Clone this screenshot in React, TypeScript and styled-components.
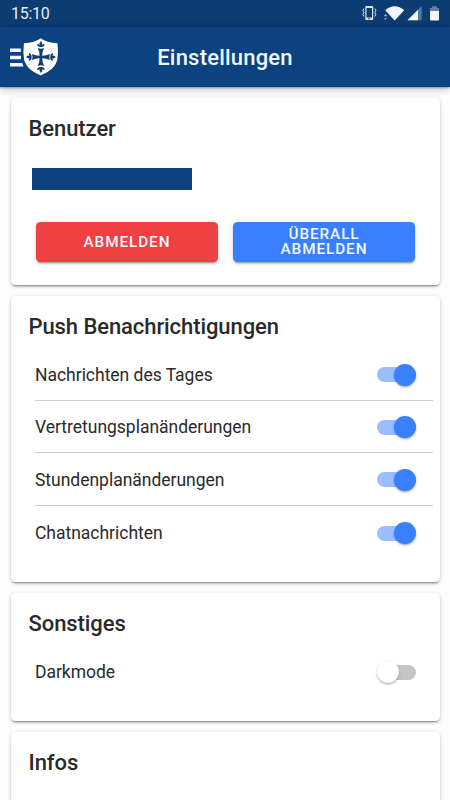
import React, { useState } from "react";
import styled, { createGlobalStyle } from "styled-components";

const GlobalStyle = createGlobalStyle`
  * { box-sizing: border-box; }
  html, body { margin: 0; padding: 0; }
  body {
    font-family: Roboto, sans-serif;
    background: #fdfdfd;
    color: #2a2a2a;
    overflow: hidden;
  }
`;

const Screen = styled.div`
  display: flex;
  flex-direction: column;
  height: 800px;
  overflow: hidden;
`;

const StatusBar = styled.div`
  flex: none;
  display: flex;
  align-items: center;
  justify-content: space-between;
  height: 27px;
  padding: 0 8px 0 11px;
  background: #0c3c72;
  color: #e6eef8;
  font-size: 16px;
  line-height: 26px;
`;

const Clock = styled.span`
  letter-spacing: -0.3px;
`;

const Toolbar = styled.header`
  flex: none;
  display: grid;
  grid-template-columns: 60px 1fr 60px;
  align-items: center;
  height: 60px;
  padding-bottom: 1px;
  background: #0b427f;
  box-shadow: 0 1px 2px rgba(11, 66, 127, 0.45), 0 2px 8px rgba(0, 0, 0, 0.22);
  z-index: 1;
`;

const MenuButton = styled.button`
  display: flex;
  padding: 0 0 0 10px;
  border: 0;
  background: none;
`;

const Title = styled.h1`
  margin: 0;
  padding-top: 3px;
  text-align: center;
  font-size: 22px;
  font-weight: 500;
  letter-spacing: 0.2px;
  line-height: 28px;
  color: #eef8ff;
`;

const Content = styled.main`
  flex: 1;
  display: flex;
  flex-direction: column;
  gap: 11px;
  padding: 11px 10px 0 11px;
`;

const Card = styled.section<{ $height: number }>`
  flex: none;
  height: ${(p) => p.$height}px;
  padding: 17px 7px 0 17.5px;
  border-radius: 4.5px;
  background: #fff;
  box-shadow: 0 3px 1px -2px rgba(0, 0, 0, 0.24), 0 2px 2px 0 rgba(0, 0, 0, 0.16),
    0 1px 5px 0 rgba(0, 0, 0, 0.14);
`;

const CardTitle = styled.h2`
  margin: 0;
  font-size: 22px;
  font-weight: 500;
  letter-spacing: -0.08px;
  line-height: 28px;
`;

const UserName = styled.div`
  width: 160px;
  height: 22px;
  margin: 25px 0 0 3.5px;
  background: #0b427f;
`;

const ButtonRow = styled.div`
  display: grid;
  grid-template-columns: 182px 182px;
  gap: 15px;
  margin: 32px 0 0 7.5px;
`;

const Button = styled.button<{ $color: string }>`
  height: 39.5px;
  padding: 1px 40px 0;
  border: 0;
  border-radius: 4.5px;
  background: ${(p) => p.$color};
  color: #f3f8ff;
  font-family: inherit;
  font-size: 15.3px;
  font-weight: 500;
  letter-spacing: 0.92px;
  line-height: 15.3px;
  text-transform: uppercase;
  box-shadow: 0 3px 1px -2px rgba(0, 0, 0, 0.2), 0 2px 2px 0 rgba(0, 0, 0, 0.14),
    0 1px 5px 0 rgba(0, 0, 0, 0.12);
`;

const List = styled.div`
  margin: 7px 0 0 6.5px;
`;

const Row = styled.label`
  display: flex;
  align-items: center;
  justify-content: space-between;
  height: 52.6px;
  padding: 2px 17px 0 0;
  font-size: 17.5px;
  letter-spacing: -0.02px;

  &:not(:last-child) {
    border-bottom: 1px solid #cdcdcd;
  }
`;

const Track = styled.button<{ $on: boolean }>`
  display: flex;
  align-items: center;
  justify-content: ${(p) => (p.$on ? "flex-end" : "flex-start")};
  width: 39px;
  height: 15px;
  padding: 0;
  border: 0;
  border-radius: 8px;
  background: ${(p) => (p.$on ? "#9bbeff" : "#c5c5c5")};
`;

const Knob = styled.span<{ $on: boolean }>`
  flex: none;
  width: 22px;
  height: 22px;
  border-radius: 50%;
  background: ${(p) => (p.$on ? "#3880ff" : "#fff")};
  box-shadow: 0 2px 2px -1px rgba(0, 0, 0, 0.24), 0 1px 3px 0 rgba(0, 0, 0, 0.22);
`;

function StatusIcons() {
  return (
    <svg width="80" height="19" viewBox="362 4 80 19" fill="#f2f7fd">
      <path
        d="M366.300 6h5.900q1 0 1 1v12q0 1-1 1h-5.900q-1 0-1-1V7q0-1 1-1zm.2 2v9.500h5.500V8zM368.200 18.300v.9h2v-.9z"
        fillRule="evenodd"
        opacity=".9"
      />
      <path
        d="M363.900 8.500l-1 2 1 2-1 2 1 2M374.800 8.500l1 2-1 2 1 2-1 2"
        fill="none"
        stroke="#dbe7f5"
        strokeWidth="1"
      />
      <path d="M385.200 10.200Q394.700 2.300 404.200 10.200L394.700 20.400z" />
      <path d="M385.500 14l2 2.300h-3.800zM387 18.300h-3l1.500 1.700z" opacity=".65" />
      <path d="M421.700 6v14.300H407.500z" opacity=".32" />
      <path d="M418 9.700v10.600h-10.500z" />
      <path d="M430 8h2V6.300h5V8h2v3h-9z" opacity=".38" />
      <path d="M430 11h9v8.500q0 1-1 1h-7q-1 0-1-1z" />
    </svg>
  );
}

const fleur =
  "M0-15.900l1.500 2.200-.5 1.500 1.700-.8 1.400.8-1.600 1.800L.9-9.900h-1.800l-1.600-.5-1.600-1.800 1.400-.8 1.700.8-.5-1.500z";

function MenuLogo() {
  return (
    <svg width="49" height="38" viewBox="10 37.500 49 38">
      <path
        d="M10 48.100h10.800v3.300H10zM10 55.300h11v3.400H10zM10 62.600h12.200l1.300 3.400H10z"
        fill="#f6faff"
      />
      <path
        d="M40.700 37.800Q46.600 42.500 57.500 42.700Q58.600 52 57.300 59.500Q54.700 69.300 40.700 75Q26.700 69.300 24.100 59.500Q22.800 52 23.900 42.700Q34.800 42.500 40.700 37.800z"
        fill="#fff"
      />
      <g fill="#183e70" transform="translate(40.900 56.500)">
        <path d="M-3.200-8.900Q0-7.700 3.200-8.900Q1.400-5.500 1.300-1.300Q5.500-1.400 8.900-3Q7.900 0 8.900 3Q5.500 1.400 1.300 1.300Q1.400 5.500 3.200 8.900Q0 7.700-3.200 8.900Q-1.400 5.500-1.300 1.300Q-5.500 1.400-8.900 3Q-7.900 0-8.900-3Q-5.500-1.400-1.300-1.300Q-1.400-5.500-3.200-8.900z" />
        <path d={fleur} />
        <path d={fleur} transform="rotate(90) scale(1 .94)" />
        <path d={fleur} transform="rotate(180)" />
        <path d={fleur} transform="rotate(270) scale(1 .94)" />
      </g>
    </svg>
  );
}

function ToggleRow({ label, initial }: { label: string; initial: boolean }) {
  const [on, setOn] = useState(initial);
  return (
    <Row>
      {label}
      <Track
        type="button"
        role="switch"
        aria-checked={on}
        aria-label={label}
        $on={on}
        onClick={() => setOn(!on)}
      >
        <Knob $on={on} />
      </Track>
    </Row>
  );
}

const pushSettings = [
  "Nachrichten des Tages",
  "Vertretungsplanänderungen",
  "Stundenplanänderungen",
  "Chatnachrichten",
];

export default function App() {
  return (
    <Screen>
      <GlobalStyle />
      <StatusBar>
        <Clock>15:10</Clock>
        <StatusIcons />
      </StatusBar>
      <Toolbar>
        <MenuButton aria-label="Menü">
          <MenuLogo />
        </MenuButton>
        <Title>Einstellungen</Title>
      </Toolbar>
      <Content>
        <Card $height={187}>
          <CardTitle>Benutzer</CardTitle>
          <UserName />
          <ButtonRow>
            <Button $color="#ef4142">Abmelden</Button>
            <Button $color="#3880ff">Überall Abmelden</Button>
          </ButtonRow>
        </Card>
        <Card $height={286}>
          <CardTitle>Push Benachrichtigungen</CardTitle>
          <List>
            {pushSettings.map((label) => (
              <ToggleRow key={label} label={label} initial />
            ))}
          </List>
        </Card>
        <Card $height={128}>
          <CardTitle>Sonstiges</CardTitle>
          <List>
            <ToggleRow label="Darkmode" initial={false} />
          </List>
        </Card>
        <Card $height={187}>
          <CardTitle>Infos</CardTitle>
        </Card>
      </Content>
    </Screen>
  );
}
